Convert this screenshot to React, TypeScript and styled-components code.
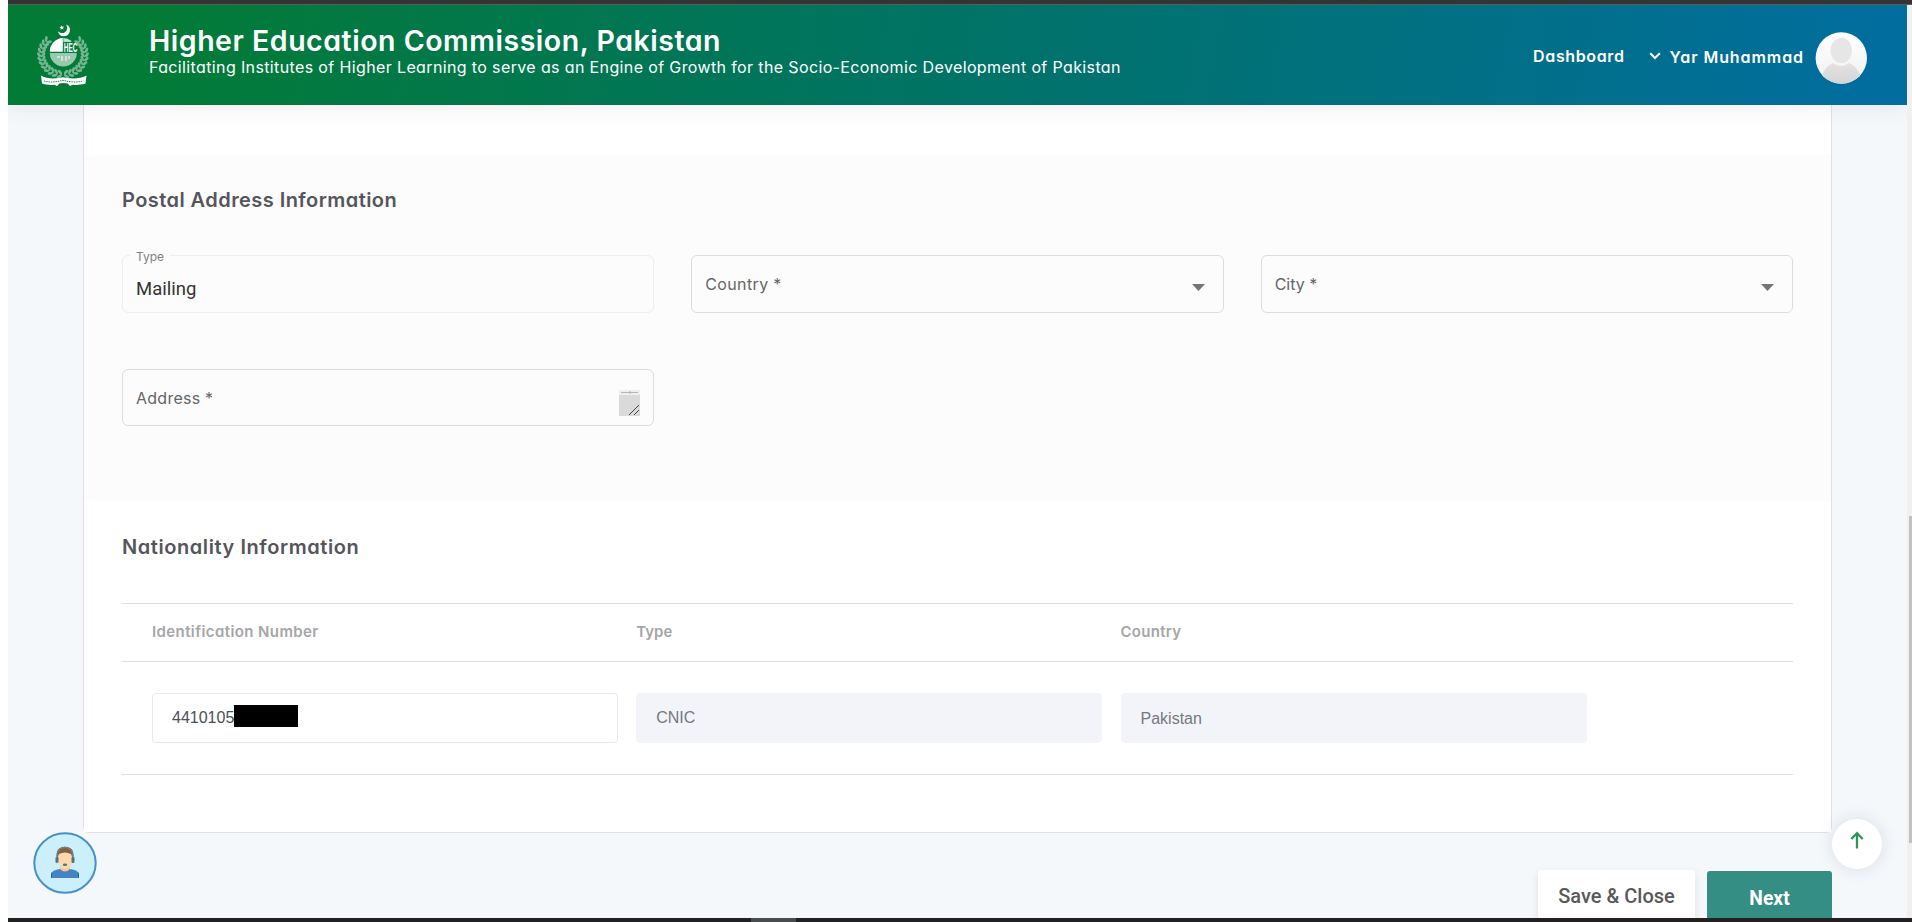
import React from 'react';
import styled, { createGlobalStyle, css } from 'styled-components';

const Global = createGlobalStyle`
  * { box-sizing: border-box; }
  body { margin: 0; background: #fff; overflow: hidden; }
`;

const poppins = css`
  font-family: Inter, "Open Sans", sans-serif;
  font-feature-settings: "cv11" 1;
`;

const Window = styled.div`
  ${poppins}
  width: 1912px;
  height: 922px;
  padding-left: 8px;
  display: flex;
  flex-direction: column;
  overflow: hidden;
`;

const TopEdge = styled.div`
  flex: none;
  height: 5px;
  background: #343434;
  border-bottom: 1px solid #5c5c5c;
`;

const BottomEdge = styled.div`
  flex: none;
  height: 4px;
  padding-left: 743px;
  background: #222021;
`;

const EdgeMark = styled.div`
  width: 45px;
  height: 4px;
  background: #4c4b4c;
`;

const Viewport = styled.div`
  flex: 1;
  min-height: 0;
  display: flex;
`;

const ScrollTrack = styled.div`
  flex: none;
  width: 5px;
  padding: 511px 0 0 2px;
  background: #f0f0f0;
`;

const ScrollThumb = styled.div`
  height: 327px;
  background: #c1c1c1;
`;

const Page = styled.div`
  flex: 1;
  display: flex;
  flex-direction: column;
  background: #f4f8fb;
  position: relative;
  overflow: hidden;
`;

const Header = styled.header`
  flex: none;
  height: 100px;
  display: flex;
  align-items: flex-start;
  color: #fff;
  background: linear-gradient(100deg, #027b37 8%, #017366 50%, #016d9e 98%);
  box-shadow: 0 0 22px rgba(60, 60, 70, 0.1);
  z-index: 1;
`;

const Logo = styled.svg`
  flex: none;
  width: 56px;
  height: 66px;
  margin: 17px 0 0 27px;
`;

const Brand = styled.div`
  flex: 1;
  padding: 17px 0 0 58px;
`;

interface TextProps { $ls?: number }

const Title = styled.h1<TextProps>`
  margin: 0;
  font-size: 28.5px;
  line-height: 37px;
  font-weight: 600;
  white-space: nowrap;
  letter-spacing: ${p => p.$ls ?? 0}px;
`;

const Tagline = styled.p<TextProps>`
  margin: 0;
  font-size: 16px;
  line-height: 16px;
  font-weight: 400;
  white-space: nowrap;
  letter-spacing: ${p => p.$ls ?? 0}px;
`;

const Nav = styled.nav`
  display: flex;
  align-items: flex-start;
  padding: 27px 40px 0 0;
  font-size: 16px;
  font-weight: 600;
`;

const NavLink = styled.span<TextProps & { $drop?: number }>`
  white-space: nowrap;
  line-height: 48px;
  padding-top: ${p => p.$drop ?? 0}px;
  letter-spacing: ${p => p.$ls ?? 0}px;
`;

const Chevron = styled.svg`
  width: 12px;
  height: 8px;
  margin: 20px 9px 0 24px;
`;

const Avatar = styled.svg`
  width: 52px;
  height: 52px;
  margin-left: 11px;
`;

const Card = styled.main`
  flex: none;
  width: 1749px;
  height: 728px;
  margin-left: 75px;
  padding-top: 49px;
  background: #fff;
  border: 1px solid #dfe1e4;
  border-top: 0;
  border-radius: 0 0 6px 6px;
`;

const Section = styled.section<{ $tint?: boolean; $h: number }>`
  height: ${p => p.$h}px;
  padding: 33px 38px 0;
  background: ${p => (p.$tint ? '#fcfcfc' : '#fff')};
`;

const Heading = styled.h2<TextProps>`
  margin: 0;
  font-size: 20px;
  line-height: 26px;
  font-weight: 600;
  color: #54565c;
  white-space: nowrap;
  letter-spacing: ${p => p.$ls ?? 0}px;
`;

const Fields = styled.div`
  display: grid;
  grid-template-columns: repeat(3, 1fr);
  column-gap: 37px;
  row-gap: 56px;
  padding-top: 42px;
`;

const Field = styled.div<{ $light?: boolean; $h?: number }>`
  height: ${p => p.$h ?? 58}px;
  display: flex;
  justify-content: space-between;
  padding: 0 13px;
  border: 1px solid ${p => (p.$light ? '#ededed' : '#dcdcdc')};
  border-radius: 6px;
  position: relative;
`;

const FieldLabel = styled.label<TextProps>`
  font-size: 16px;
  line-height: 56px;
  color: #666;
  letter-spacing: ${p => p.$ls ?? 0}px;
`;

const FloatLabel = styled.label`
  position: absolute;
  left: 7px;
  top: -8px;
  padding: 0 6px;
  font-size: 12px;
  line-height: 17px;
  color: #808080;
  background: #fcfcfc;
`;

const FieldValue = styled.span`
  font-family: Roboto, sans-serif;
  font-size: 18.5px;
  line-height: 66px;
  color: #333;
`;

const Caret = styled.svg`
  width: 13px;
  height: 7px;
  margin: 28px 5px 0 0;
`;

const Resizer = styled.svg`
  width: 21px;
  height: 26px;
  margin-top: 20px;
`;

const Table = styled.div`
  margin-top: 43px;
  border-top: 1px solid #dcdfe2;
  border-bottom: 1px solid #dcdfe2;
`;

const Row = styled.div<{ $head?: boolean }>`
  display: grid;
  grid-template-columns: repeat(3, 466px);
  column-gap: 18.25px;
  padding: 0 0 ${p => (p.$head ? 2 : 0)}px 30px;
  height: ${p => (p.$head ? 58 : 112)}px;
  align-items: center;
  border-bottom: ${p => (p.$head ? '1px solid #dcdfe2' : '0')};
`;

const HeadCell = styled.div<TextProps>`
  font-size: 15px;
  font-weight: 600;
  color: #a6a6a8;
  letter-spacing: ${p => p.$ls ?? 0}px;
`;

const Input = styled.div<{ $filled?: boolean; $drop?: number }>`
  height: 50px;
  display: flex;
  align-items: center;
  padding: ${p => p.$drop ?? 0}px 19px 0;
  font-family: "Liberation Sans", Arial, sans-serif;
  font-size: 16px;
  color: ${p => (p.$filled ? '#76787e' : '#495057')};
  background: ${p => (p.$filled ? '#f3f4f9' : '#fff')};
  border: 1px solid ${p => (p.$filled ? '#f3f4f9' : '#e8e9f0')};
  border-radius: 4px;
`;

const Redaction = styled.span`
  width: 64px;
  height: 22px;
  margin-top: -4px;
  background: #000;
`;

const Actions = styled.div`
  display: flex;
  justify-content: flex-end;
  align-items: flex-start;
  gap: 12px;
  padding: 37px 75px 0 0;
`;

const Button = styled.button<{ $primary?: boolean }>`
  flex: none;
  width: ${p => (p.$primary ? 125 : 157)}px;
  height: ${p => (p.$primary ? 54 : 52)}px;
  margin-top: ${p => (p.$primary ? 1 : 0)}px;
  padding: 0;
  border: 0;
  border-radius: 3px;
  font-family: Roboto, sans-serif;
  font-size: ${p => (p.$primary ? 19.3 : 20)}px;
  font-weight: ${p => (p.$primary ? 700 : 500)};
  color: ${p => (p.$primary ? '#fff' : '#595959')};
  background: ${p => (p.$primary ? '#348e84' : '#fff')};
  box-shadow: ${p => (p.$primary ? 'none' : '0 3px 8px rgba(70, 80, 110, 0.12)')};
`;

const Support = styled.svg`
  position: absolute;
  left: 24.5px;
  top: 827px;
  width: 64px;
  height: 62px;
`;

const ToTop = styled.button`
  position: absolute;
  left: 1824px;
  top: 814px;
  width: 50px;
  height: 50px;
  padding: 0;
  border: 0;
  border-radius: 50%;
  background: #fff;
  box-shadow: 0 0 16px rgba(82, 63, 105, 0.16);
  display: flex;
  justify-content: center;
  svg { width: 14px; height: 18px; margin-top: 12px; }
`;

const leaves = Array.from({ length: 12 }, (_, i) => {
  const r = 100 + i * 11.5;
  const a = (r * Math.PI) / 180;
  return { x: 28 + 21.8 * Math.cos(a), y: 32.5 + 20 * Math.sin(a), r };
});

const Wreath = () => (
  <>
    {leaves.map((l, i) => (
      <g key={i} transform={`translate(${l.x} ${l.y}) rotate(${l.r})`}>
        <ellipse cx="-2" cy="1" rx="1.4" ry="2.7" transform="rotate(35)" />
        <ellipse cx="2" cy="1" rx="1.4" ry="2.7" transform="rotate(-35)" />
        <circle r="1" cy="-2" />
      </g>
    ))}
  </>
);

const Emblem = () => (
  <Logo viewBox="0 0 56 66">
    <g fill="#fff">
      <path d="M31 2.6a6 6 0 1 1-8 6.6a5 5 0 1 0 8-6.6z" />
      <path d="M26.6 3.2l.8 1.5 1.7-.1-1.1 1.3.6 1.6-1.6-.7-1.4 1 .2-1.7-1.4-1 1.7-.3z" />
      <g opacity=".45">
        <Wreath />
        <g transform="translate(56 0) scale(-1 1)"><Wreath /></g>
      </g>
      <circle cx="28.3" cy="29.5" r="14.5" fill="#027b3a" />
      <path d="M14.8 29.8a13.5 13.5 0 0 1 13-13.7v13.700z" />
      <path d="M28.3 16a13.5 13.5 0 0 1 8 2.8v1.2h-8z" opacity=".75" />
      <path d="M14.8 31h27a13.5 13.5 0 0 1-27 0z" opacity=".6" />
      <text x="28.8" y="30" fontFamily="Liberation Sans, sans-serif" fontWeight="700" fontSize="12.5" textLength="13.5" lengthAdjust="spacingAndGlyphs">HEC</text>
      <path d="M22 35h3M27 34v5M31 34v5M34 34v3" stroke="#fff" strokeWidth="1" />
      <path d="M6 53.5c6 3.5 12 3.5 19 2.3q3-1 6 0c7 1.2 14 1.2 20.5-2.3l-1 8c-5 1.5-9 1.7-13 1.2l-2.5 1.3-2.5-2.5q-4-1-8 0L22 64l-2.5-1.3c-4 .5-8 .3-12.5-1.2z" />
    </g>
    <path d="M9 59c5 1.5 11 1.2 16-.1q3-.7 6 0c5 1.3 12 1.6 17 .1" fill="none" stroke="#027b3a" strokeDasharray="1.5 .8" strokeWidth=".9" />
  </Logo>
);

const DropArrow = () => (
  <Caret viewBox="0 0 13 7"><path d="M0 0h13L6.5 7z" fill="#757575" /></Caret>
);

export default function App() {
  return (
    <Window>
      <Global />
      <TopEdge />
      <Viewport>
        <Page>
          <Header>
            <Emblem />
            <Brand>
              <Title $ls={0.53}>Higher Education Commission, Pakistan</Title>
              <Tagline $ls={0.37}>Facilitating Institutes of Higher Learning to serve as an Engine of Growth for the Socio-Economic Development of Pakistan</Tagline>
            </Brand>
            <Nav>
              <NavLink $ls={0.62}>Dashboard</NavLink>
              <Chevron viewBox="0 0 12 8"><path d="M1.2 1.2L6 6l4.8-4.8" fill="none" stroke="#fff" strokeWidth="2" /></Chevron>
              <NavLink $drop={1} $ls={0.93}>Yar Muhammad</NavLink>
              <Avatar viewBox="0 0 52 52">
                <defs>
                  <linearGradient id="face" x1="0" y1="0" x2="0" y2="1"><stop offset="0" stopColor="#fff" /><stop offset="1" stopColor="#f1f1f1" /></linearGradient>
                  <linearGradient id="person" x1="0" y1="0" x2="0" y2="1"><stop offset="0" stopColor="#e3e3e3" /><stop offset="1" stopColor="#d5d5d5" /></linearGradient>
                  <clipPath id="round"><circle cx="26.3" cy="26" r="25.7" /></clipPath>
                </defs>
                <g clipPath="url(#round)">
                  <rect width="52" height="52" fill="url(#face)" />
                  <path d="M5 52c0-9 6-18 13-21q8 6 16 0c8 3 13 12 13 21z" fill="url(#person)" />
                  <ellipse cx="26.3" cy="18.5" rx="10.7" ry="12.7" fill="#e6e6e6" />
                </g>
              </Avatar>
            </Nav>
          </Header>
          <Card>
            <Section $tint $h={347}>
              <Heading $ls={0.44}>Postal Address Information</Heading>
              <Fields>
                <Field $light>
                  <FloatLabel>Type</FloatLabel>
                  <FieldValue>Mailing</FieldValue>
                </Field>
                <Field><FieldLabel $ls={0.35}>Country *</FieldLabel><DropArrow /></Field>
                <Field><FieldLabel>City *</FieldLabel><DropArrow /></Field>
                <Field $h={57}>
                  <FieldLabel $ls={0.25}>Address *</FieldLabel>
                  <Resizer viewBox="0 0 21 26">
                    <path d="M0 0h21v5H0z" fill="#efefef" />
                    <path d="M2 2.5h17M11 1v3" stroke="#b5b5b5" />
                    <path d="M0 5h21v21H0z" fill="#dadada" />
                    <path d="M10 25L20 15M15 25l5-5" stroke="#444" />
                  </Resizer>
                </Field>
              </Fields>
            </Section>
            <Section $h={331}>
              <Heading $ls={0.57}>Nationality Information</Heading>
              <Table>
                <Row $head>
                  <HeadCell $ls={0.4}>Identification Number</HeadCell>
                  <HeadCell>Type</HeadCell>
                  <HeadCell $ls={0.3}>Country</HeadCell>
                </Row>
                <Row>
                  <Input>4410105<Redaction /></Input>
                  <Input $filled>CNIC</Input>
                  <Input $filled $drop={2}>Pakistan</Input>
                </Row>
              </Table>
            </Section>
          </Card>
          <Actions>
            <Button>Save &amp; Close</Button>
            <Button $primary>Next</Button>
          </Actions>
          <Support viewBox="0 0 64 62">
            <ellipse cx="32" cy="31" rx="30.7" ry="29.8" fill="#cbf0fc" stroke="#4590cb" strokeWidth="2" />
            <path d="M18 46v-4q1-4 9-5h10q8 1 9 5v4z" fill="#4383c6" />
            <path d="M18 46v-4l1-2v6zM46 46v-4l-1-2v6z" fill="#2b5c94" />
            <path d="M27 34h10v3q-5 5-10 0z" fill="#f8c894" />
            <path d="M25 24c0-9 14-9 14 0v6c0 4-4 7-7 7s-7-3-7-7z" fill="#fed7ad" />
            <path d="M24 27v-7q1-5 8-5t8 5v7l-2-5q-6-3-12 0z" fill="#8a5b3c" />
            <path d="M24 25c-1-13 17-13 16 0" fill="none" stroke="#6f7f86" strokeWidth="1.5" />
            <rect x="22.5" y="25" width="3" height="6" rx="1.2" fill="#4f7480" />
            <rect x="38.5" y="25" width="3" height="6" rx="1.2" fill="#4f7480" />
            <path d="M24 31q2 2 6 1.7" fill="none" stroke="#dce5e9" strokeWidth="1.5" />
            <ellipse cx="32" cy="32.7" rx="2.2" ry="1.2" fill="#4f7480" />
          </Support>
          <ToTop>
            <svg viewBox="0 0 14 18"><path d="M7 17.5V2M1.3 8L7 2.2 12.7 8" fill="none" stroke="#2f9458" strokeWidth="2.3" /></svg>
          </ToTop>
        </Page>
        <ScrollTrack><ScrollThumb /></ScrollTrack>
      </Viewport>
      <BottomEdge><EdgeMark /></BottomEdge>
    </Window>
  );
}
